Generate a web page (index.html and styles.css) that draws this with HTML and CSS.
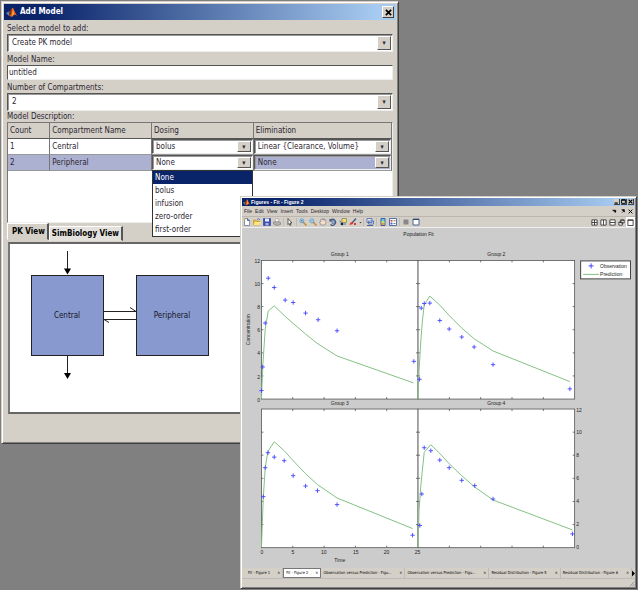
FILE: index.html
```
<!DOCTYPE html>
<html lang="en">
<head>
<meta charset="utf-8">
<title>Add Model</title>
<link rel="stylesheet" href="styles.css">
</head>
<body>
<svg class="defs" aria-hidden="true">
  <symbol id="logo" viewBox="0 0 11 11">
    <path d="M0 6l4-2 2 2-3 3z" fill="#4f8fc4"/><path d="M3 5l3-4 2 3-3 6-2-2z" fill="#8c2a12"/><path d="M6 1q1-1 2 2l3 6q-2-2-3-1l-2 2-2-1q2-3 2-8z" fill="#e8641c"/><path d="M7 2l1 5-2 2z" fill="#f6b64a"/>
  </symbol>
  <symbol id="close" viewBox="0 0 8 8"><path d="M1 1l6 6M7 1l-6 6" stroke="#000" stroke-width="2"/></symbol>
</svg>
<main class="desktop">
  <section class="window dialog" aria-label="Add Model">
    <header class="titlebar">
      <svg class="logo"><use href="#logo"/></svg>
      <h1>Add Model</h1>
      <button class="winbtn" aria-label="Close"><svg><use href="#close"/></svg></button>
    </header>
    <form class="form">
      <label for="model">Select a model to add:</label>
      <span class="combo"><select id="model"><option>Create PK model</option></select></span>
      <label for="name">Model Name:</label>
      <input class="field" id="name" type="text" value="untitled">
      <label for="count">Number of Compartments:</label>
      <span class="combo"><select id="count"><option>2</option></select></span>
      <p class="caption" id="desc">Model Description:</p>
      <div class="tablebox">
        <table aria-labelledby="desc">
          <colgroup><col class="c1"><col class="c2"><col class="c3"><col class="c4"></colgroup>
          <thead><tr><th>Count</th><th>Compartment Name</th><th>Dosing</th><th>Elimination</th></tr></thead>
          <tbody>
            <tr><td>1</td><td>Central</td>
              <td class="cell"><span class="combo"><select aria-label="Central dosing"><option>bolus</option></select></span></td>
              <td class="cell"><span class="combo"><select aria-label="Central elimination"><option>Linear {Clearance, Volume}</option></select></span></td></tr>
            <tr class="selected"><td>2</td><td>Peripheral</td>
              <td class="cell"><span class="combo"><select aria-label="Peripheral dosing"><option>None</option></select></span>
                <ul class="menu" role="listbox" aria-label="Dosing"><li role="option" aria-selected="true">None</li><li role="option">bolus</li><li role="option">infusion</li><li role="option">zero-order</li><li role="option">first-order</li></ul></td>
              <td class="cell"><span class="combo tinted"><select aria-label="Peripheral elimination"><option>None</option></select></span></td></tr>
          </tbody>
        </table>
      </div>
    </form>
    <div class="views" role="tablist">
      <button class="view active" role="tab" aria-selected="true">PK View</button><button class="view" role="tab">SimBiology View</button>
    </div>
    <div class="pane">
      <svg class="diagram" width="220" height="166" viewBox="0 0 220 166">
        <g fill="#8899cf" stroke="#222"><rect x="21.500" y="31.500" width="72" height="80"/><rect x="126.500" y="31.500" width="72" height="80"/></g>
        <path d="M57.500 7v20M57.500 112v20M94 67.500h32l-6-4M126 75.500h-32l5 3" fill="none" stroke="#222"/>
        <path d="M54 24.500h7l-3.500 6zM54 129h7l-3.500 6z" fill="#000"/>
        <g class="nodes"><text x="57" y="74">Central</text><text x="162" y="74">Peripheral</text></g>
      </svg>
    </div>
  </section>

  <section class="window figures" aria-label="Figures">
    <header class="titlebar small">
      <svg class="logo"><use href="#logo"/></svg>
      <h2>Figures - Fit - Figure 2</h2>
      <button class="winbtn" aria-label="Minimize"><svg viewBox="0 0 8 8"><path d="M1 6.500h5" stroke="#000" stroke-width="2"/></svg></button>
      <button class="winbtn" aria-label="Maximize"><svg viewBox="0 0 8 8"><path d="M1 1h6v6h-6zM1 2h6" fill="none" stroke="#000" stroke-width="1.500"/></svg></button>
      <button class="winbtn" aria-label="Close"><svg><use href="#close"/></svg></button>
    </header>
    <nav class="menubar">
      <button>File</button><button>Edit</button><button>View</button><button>Insert</button><button>Tools</button><button>Desktop</button><button>Window</button><button>Help</button>
      <span class="spacer"></span>
      <button class="dock" aria-label="Dock menu"><svg viewBox="0 0 8 8"><path d="M1 2h5v3zM5 3v3" fill="#000" stroke="#000"/></svg></button>
      <button class="dock" aria-label="Undock"><svg viewBox="0 0 8 8"><path d="M3 1h4v4zM3 6l2-2" fill="#000" stroke="#000"/></svg></button>
      <button class="dock" aria-label="Close figure"><svg viewBox="0 0 8 8"><path d="M1 1l6 6M7 1l-6 6" stroke="#000" stroke-width="1.500"/></svg></button>
    </nav>
    <div class="toolbar">
      <button aria-label="New"><svg viewBox="0 0 8 8"><path d="M1.500.5h3l2 2v5h-5z" fill="#fff" stroke="#8190b0"/><path d="M4.500.5v2h2" fill="none" stroke="#4a68a8"/><circle cx="1.500" cy="1.500" r="1" fill="#e8b838"/></svg></button>
      <button aria-label="Open"><svg viewBox="0 0 8 8"><path d="M.5 7v-5h2l1 1h3v4z" fill="#e8bb3a" stroke="#ad8520" stroke-width=".5"/><path d="M.5 7l1.500-3h6l-1.500 3z" fill="#ffe680"/><path d="M4 1.500q2-2 3 .5" fill="none" stroke="#38559a" stroke-width=".7"/></svg></button>
      <button aria-label="Save"><svg viewBox="0 0 8 8"><path d="M.5.5h7v7h-7z" fill="#3c50b4" stroke="#4a5aa8"/><path d="M2 .5h4v3h-4z" fill="#e7edff"/><path d="M2.500 5h3v2.500h-3z" fill="#a9b5dc"/></svg></button>
      <button aria-label="Print"><svg viewBox="0 0 8 8"><path d="M2 4l1-3.500 3 1-1 3" fill="#fff" stroke="#999" stroke-width=".6"/><path d="M.5 4l5-.5 2 1v2l-4 1-3-1.500z" fill="#b1b1b1" stroke="#777" stroke-width=".6"/></svg></button>
      <i></i>
      <button aria-label="Pointer"><svg viewBox="0 0 8 8"><path d="M2 .5l4 4.500h-2l1 2-1 .5-1-2-1 1z" fill="#fff" stroke="#222" stroke-width=".7"/></svg></button>
      <i></i>
      <button aria-label="Zoom in"><svg viewBox="0 0 8 8"><path d="M4 4l3.500 3.500" stroke="#c98735" stroke-width="1.500"/><circle cx="2.800" cy="2.800" r="2" fill="#c9e5fa" stroke="#4c92c9" stroke-width=".8"/><path d="M1.800 2.800h2M2.800 1.800v2" stroke="#245" stroke-width=".5"/></svg></button>
      <button aria-label="Zoom out"><svg viewBox="0 0 8 8"><path d="M4 4l3.500 3.500" stroke="#c98735" stroke-width="1.500"/><circle cx="2.800" cy="2.800" r="2" fill="#c9e5fa" stroke="#4c92c9" stroke-width=".8"/><path d="M1.800 2.800h2" stroke="#245" stroke-width=".5"/></svg></button>
      <button aria-label="Pan"><svg viewBox="0 0 8 8"><path d="M2 7l-1.500-3 1-.5.5.5-.5-2.500 1-.5 1 1V.5h1l.5 2 .5-1.500 1 .5.500 3-1 2.500z" fill="#f5dfc0" stroke="#8880a0" stroke-width=".7"/></svg></button>
      <button aria-label="Rotate"><svg viewBox="0 0 8 8"><path d="M1.500 2a3 3 0 1 1 0 4.500" fill="none" stroke="#435883" stroke-width="1.300"/><path d="M.5.5v3h3z" fill="#354a78"/><path d="M3 2.500h2.500v3h-2.500z" fill="#9cb0d8" stroke="#435883" stroke-width=".5"/></svg></button>
      <button aria-label="Data cursor"><svg viewBox="0 0 8 8"><path d="M3 .5h4.500v4h-4.500z" fill="#eee06a" stroke="#807a50" stroke-width=".7"/><path d="M.5 3q2 0 3 4.500M1 6h6" fill="none" stroke="#3953a2" stroke-width=".8"/><path d="M2 5h2v2h-2z" fill="#222"/></svg></button>
      <button aria-label="Brush"><svg viewBox="0 0 8 8"><path d="M3 5l4-4.500" stroke="#445280" stroke-width="1.200"/><path d="M.5 7q.5-3 3-3l.5 2z" fill="#db3323"/><path d="M5 5h2v2h-2z" fill="#d43a2b"/></svg></button>
      <button class="drop" aria-label="Brush options"><svg viewBox="0 0 8 8"><path d="M1 3h6l-3 3z"/></svg></button>
      <i></i>
      <button aria-label="Link plot"><svg viewBox="0 0 8 8"><path d="M1 .5h5v4h-5zM2.500 3h5v3h-5z" fill="#dce7fa" stroke="#4a659e" stroke-width=".8"/><path d="M1 7.500h6" stroke="#4a659e"/></svg></button>
      <i></i>
      <button aria-label="Colorbar"><svg viewBox="0 0 8 8"><path d="M2 .5h4v7h-4z" fill="#65c8e8" stroke="#3d60a0"/><path d="M2.500 3h3v2h-3z" fill="#c8de66"/><path d="M2.500 5h3v2h-3z" fill="#ee9947"/></svg></button>
      <button aria-label="Legend"><svg viewBox="0 0 8 8"><path d="M.5.5h7v7h-7z" fill="#fff" stroke="#5570a8"/><path d="M1.500 2h2v1.500h-2z" fill="#d63d40"/><path d="M1.500 4.500h2v2h-2z" fill="#4165cc"/><path d="M4.500 2.800h2M4.500 5.500h2" stroke="#777"/></svg></button>
      <i></i>
      <button aria-label="Hide plot tools"><svg viewBox="0 0 8 8"><path d="M1.500 1.500h5v5h-5z" fill="#888"/></svg></button>
      <button aria-label="Show plot tools"><svg viewBox="0 0 8 8"><path d="M1 1h6v6h-6z" fill="#fff" stroke="#4a649a"/><path d="M1 1.500h6" stroke="#344b78"/></svg></button>
      <span class="spacer"></span>
      <button class="tile" aria-label="Tile"><svg viewBox="0 0 8 8"><path d="M1 1h6v6h-6zM4 1v6M1 4h6"/></svg></button>
      <button class="tile" aria-label="Left and right"><svg viewBox="0 0 8 8"><path d="M1 1h6v6h-6zM4 1v6"/></svg></button>
      <button class="tile" aria-label="Top and bottom"><svg viewBox="0 0 8 8"><path d="M1 1h6v6h-6zM1 4h6"/></svg></button>
      <button class="tile" aria-label="Float"><svg viewBox="0 0 8 8"><path d="M3 1h4v3.500h-4zM3 1.500h4M1 3.500h4v3.500h-4zM1 4h4"/></svg></button>
      <button class="tile on" aria-label="Maximize layout"><svg viewBox="0 0 8 8"><path d="M1 1h6v6.500h-6zM1 1.500h6"/></svg></button>
    </div>
    <svg class="chart" viewBox="242 227 394 341" role="img" aria-label="Population Fit">
      <defs>
        <marker id="plus" viewBox="-3 -3 6 6" markerWidth="6" markerHeight="6" markerUnits="userSpaceOnUse"><path d="M-2.200 0h4.400M0-2.200v4.400" stroke="#4444ff" stroke-width=".9"/></marker>
        <g id="axes" fill="none" stroke="#555" stroke-width=".8">
          <rect width="157" height="139" fill="#fff"/>
          <path d="M31.400 0v2M62.800 0v2M94.200 0v2M125.600 0v2M31.400 139v-2M62.800 139v-2M94.200 139v-2M125.600 139v-2M0 23.200h2M0 46.300h2M0 69.500h2M0 92.700h2M0 115.800h2M157 23.200h-2M157 46.300h-2M157 69.500h-2M157 92.700h-2M157 115.800h-2"/>
        </g>
      </defs>
      <use href="#axes" x="261.500" y="259.500"/><use href="#axes" x="418.500" y="259.500"/>
      <use href="#axes" x="261.500" y="408.500"/><use href="#axes" x="418.500" y="408.500"/>
      <g class="fit">
        <polyline points="261.500,398 263,363 265.300,328 268.300,310.300 274.300,305 285.300,315.700 293.300,322.700 305.700,333.300 318.300,343.300 337.300,355.300 414,382.300"/>
        <polyline points="418.500,398 419.500,370 421.300,340 422.700,321.700 424.700,304 430.300,295.300 440.300,304.300 449.700,314.700 462.300,327.300 474.700,338 493.700,350.300 570.700,381"/>
        <polyline points="261.500,547 263.300,498 265.300,467 268,451 274.300,441.300 284.300,450.300 293.300,460.300 305.700,473.300 317.700,484.300 337.300,497.700 413,528.300"/>
        <polyline points="418.500,547 419.500,510 421.300,485 424.700,451.700 431.300,444.300 440.300,453 449.700,463.300 462.300,475.300 475.300,486.700 493.700,499.700 573.300,529.700"/>
      </g>
      <g class="obs">
        <polyline points="261.500,390 262.700,366.300 265.300,322.300 268.300,277.300 274.300,286.700 285.300,299.300 293.300,301.700 305.700,312.300 318.300,319 337.300,330 414.300,360.700"/>
        <polyline points="420,378.700 421.700,307.300 424.700,302.700 430.300,302.300 440.300,319.700 449.700,328.300 462.300,336.300 474.700,346.300 493.700,364 570.700,388.300"/>
        <polyline points="263.300,496.300 265.300,467.300 268,452.300 274.300,456.700 284.300,460.300 293.300,475.300 305.700,485.700 317.700,490.300 337.300,504.300 413,535"/>
        <polyline points="420.300,525.300 422.300,493.700 424.700,447.300 431.300,450.300 440.300,459.700 449.700,467.300 462.300,480 475.300,485.300 493.700,498.700 573.300,533.700"/>
      </g>
      <g class="group"><text x="340" y="255">Group 1</text><text x="497" y="255">Group 2</text><text x="340" y="404">Group 3</text><text x="497" y="404">Group 4</text></g>
      <text class="mid" x="419" y="235">Population Fit</text>
      <g class="left"><text x="260" y="262">12</text><text x="260" y="285">10</text><text x="260" y="308">8</text><text x="260" y="331">6</text><text x="260" y="354">4</text><text x="260" y="378">2</text><text x="260" y="401">0</text></g>
      <g><text x="577" y="411">12</text><text x="577" y="434">10</text><text x="577" y="457">8</text><text x="577" y="480">6</text><text x="577" y="503">4</text><text x="577" y="526">2</text><text x="577" y="549">0</text></g>
      <g class="mid"><text x="262" y="554">0</text><text x="293" y="554">5</text><text x="324" y="554">10</text><text x="356" y="554">15</text><text x="387" y="554">20</text><text x="418" y="554">25</text><text x="340" y="562">Time</text><text transform="translate(250 329) rotate(-90)">Concentration</text></g>
      <rect class="key" x="581.500" y="260" width="50" height="18"/>
      <path d="M589.500 265h5M592 262.500v5" stroke="#44f"/><path d="M584 273.500h16" stroke="#84c184"/>
      <text x="601" y="267">Observation</text><text x="601" y="275">Prediction</text>
    </svg>
    <div class="docs" role="tablist">
      <div class="doc w1"><button role="tab">Fit - Figure 1</button><button class="x" aria-label="Close tab">×</button></div>
      <div class="doc w1 active"><button role="tab">Fit - Figure 2</button><button class="x" aria-label="Close tab">×</button></div>
      <div class="doc w3"><button role="tab">Observation versus Prediction - Figu...</button><button class="x" aria-label="Close tab">×</button></div>
      <div class="doc w3"><button role="tab">Observation versus Prediction - Figu...</button><button class="x" aria-label="Close tab">×</button></div>
      <div class="doc w2"><button role="tab">Residual Distribution - Figure 5</button><button class="x" aria-label="Close tab">×</button></div>
      <div class="doc w2"><button role="tab">Residual Distribution - Figure 6</button><button class="x" aria-label="Close tab">×</button></div>
      <button class="next" aria-label="More tabs"><svg viewBox="0 0 4 8"><path d="M0 0l4 4-4 4z"/></svg></button>
    </div>
    <footer class="status"><svg viewBox="0 0 8 8"><path d="M7 1l-6 6M7 4l-3 3M8 6l-1 1" stroke="#888"/></svg></footer>
  </section>
</main>
</body>
</html>
```
FILE: styles.css
```
* { box-sizing: border-box; }
body { margin: 0; background: #808080; color: #2c2630; font: 8px/10px "DejaVu Sans Condensed", "Liberation Sans", sans-serif; }
button, input, select { font: inherit; color: inherit; border: 0; padding: 0; margin: 0; background: none; border-radius: 0; }
h1, h2, p, ul { margin: 0; padding: 0; }
.defs { position: absolute; width: 0; height: 0; }
.desktop { position: relative; min-height: 100vh; }
.window { position: absolute; isolation: isolate; background: #d4d0c8; border: 1px solid #d4d0c8; border-right-color: #404040; border-bottom-color: #404040; box-shadow: inset 1px 1px #fff, inset -1px -1px #808080; }
.dialog { top: 1px; left: 1px; width: 62.4%; padding: 2px 2px 29px; }
.figures { top: 196px; left: 240px; right: 1px; padding: 1px; font: 5px/8px "Liberation Sans", sans-serif; }

.titlebar { display: flex; align-items: center; height: 16px; padding: 0 2px; gap: 3px; color: #fff; background: linear-gradient(90deg, #0a246a 10%, #a6caf0 95%); }
.titlebar h1, .titlebar h2 { flex: 1; font-size: inherit; font-weight: bold; }
.logo { width: 11px; height: 11px; }
.winbtn { display: grid; place-items: center; width: 12px; height: 12px; background: #d4d0c8; border: 1px solid; border-color: #fff #404040 #404040 #fff; }
.winbtn svg { width: 7px; height: 7px; }
.small { height: 8px; gap: 1px; padding: 0 1px; }
.small .logo { width: 7px; height: 7px; }
.small .winbtn { width: 6px; height: 6px; border-width: 0 1px 1px 0; }
.small .winbtn svg { width: 5px; height: 5px; }

.form { display: flex; flex-direction: column; padding: 4px 3px 0; }
.form label, .caption { height: 10px; white-space: nowrap; }
.combo { position: relative; display: block; height: 18px; background: #fff; border: 1px solid; border-color: #555 #eee #eee #555; box-shadow: inset 1px 1px #999; }
.form > .combo, .field { margin-bottom: 3px; }
.combo select { display: block; width: 100%; height: 100%; padding: 0 16px 0 4px; appearance: none; outline: 0; }
.combo::after { content: "▾"; position: absolute; top: 1px; right: 1px; bottom: 1px; width: 12px; display: grid; place-items: center; font-size: 7px; line-height: 8px; pointer-events: none; background: #d4d0c8; border: 1px solid; border-color: #fff #555 #555 #fff; }
.field { height: 15px; padding: 0 1px; background: #fff; border: 1px solid; border-color: #555 #eee #eee #555; outline: 0; }
.caption { margin-top: -2px; }
.tablebox { height: 101px; background: #fff; border: 1px solid; border-color: #777 #eee #eee #777; }
table { width: 100%; table-layout: fixed; border-collapse: separate; border-spacing: 0; }
.c1 { width: 11%; }
.c2 { width: 26.5%; }
.c3 { width: 26.5%; }
th, td { height: 16px; padding: 0 2px; text-align: left; font-weight: normal; border-right: 1px solid #777; border-bottom: 1px solid #999; white-space: nowrap; }
th { background: #d4d0c8; border-bottom-color: #555; }
.selected { background: #acb1d1; }
.cell { position: relative; padding: 0; }
.cell .combo { height: 15px; }
.cell .combo select { padding-left: 3px; }
.cell .tinted { background: #acb1d1; }
.menu { position: absolute; z-index: 1; top: 15px; left: 0; right: 0; list-style: none; background: #fff; border: 1px solid #333; }
.menu li { height: 13px; padding: 0 2px; line-height: 13px; }
.menu [aria-selected] { background: #0a246a; color: #fff; }

.views { display: flex; align-items: flex-end; height: 18px; padding: 0 3px; }
.view { height: 15px; padding: 0 2px; font-weight: bold; color: #000; background: #e4e1dc; border: 1px solid; border-color: #fff #555 transparent #fff; border-right-width: 2px; white-space: nowrap; }
.view.active { height: 17px; padding-left: 4px; align-self: flex-start; background: #d4d0c8; }
.pane { margin: 1px 4px 0 4px; height: 172px; background: #fff; border: 2px solid; border-color: #666 #eee #666 #777; }
.diagram { display: block; }
.nodes { text-anchor: middle; fill: #151525; }

.menubar, .toolbar { display: flex; align-items: center; }
.menubar { height: 10px; gap: 3px; padding: 0 2px; }
.spacer { flex: 1; }
.dock svg { display: block; width: 5px; height: 5px; }
.toolbar { height: 12px; border-top: 1px solid #bbb7af; border-bottom: 1px solid #eee; }
.toolbar button { display: grid; place-items: center; width: 10px; height: 10px; }
.toolbar svg { width: 8px; height: 8px; }
.toolbar i { width: 1px; height: 8px; margin: 0 1px; background: #bbb; }
.toolbar .drop { width: 4px; }
.toolbar .drop svg { width: 3px; height: 3px; }
.toolbar .tile { width: 9px; }
.tile path { fill: #fff; stroke: #333; stroke-width: 1; }
.toolbar .on { background: #fff; }
.toolbar .tile svg { width: 7px; height: 7px; }

.chart { display: block; width: 100%; background: #ccc; font-size: 5px; fill: #222; }
.fit polyline { fill: none; stroke: #84c184; stroke-width: 1; }
.obs polyline { fill: none; stroke: none; marker: url(#plus); }
.group, .mid { text-anchor: middle; }
.left { text-anchor: end; }
.key { fill: #fff; stroke: #444; stroke-width: 1; }

.docs { display: flex; height: 10px; padding-left: 4px; color: #000; font-size: 4px; font-family: "DejaVu Sans Condensed", sans-serif; }
.doc { display: flex; justify-content: space-between; align-items: center; min-width: 0; padding: 0 2px; white-space: nowrap; border-right: 1px solid #bbb; }
.doc.active { background: #fff; border: 1px solid #777; }
.w1 { flex: 33 1 0; }
.w2 { flex: 68 1 0; }
.w3 { flex: 81 1 0; }
.next svg { display: block; width: 3px; height: 7px; }
.status { display: flex; justify-content: flex-end; align-items: flex-end; height: 9px; border-top: 1px solid #bbb; }
.status svg { width: 6px; height: 6px; }
```
